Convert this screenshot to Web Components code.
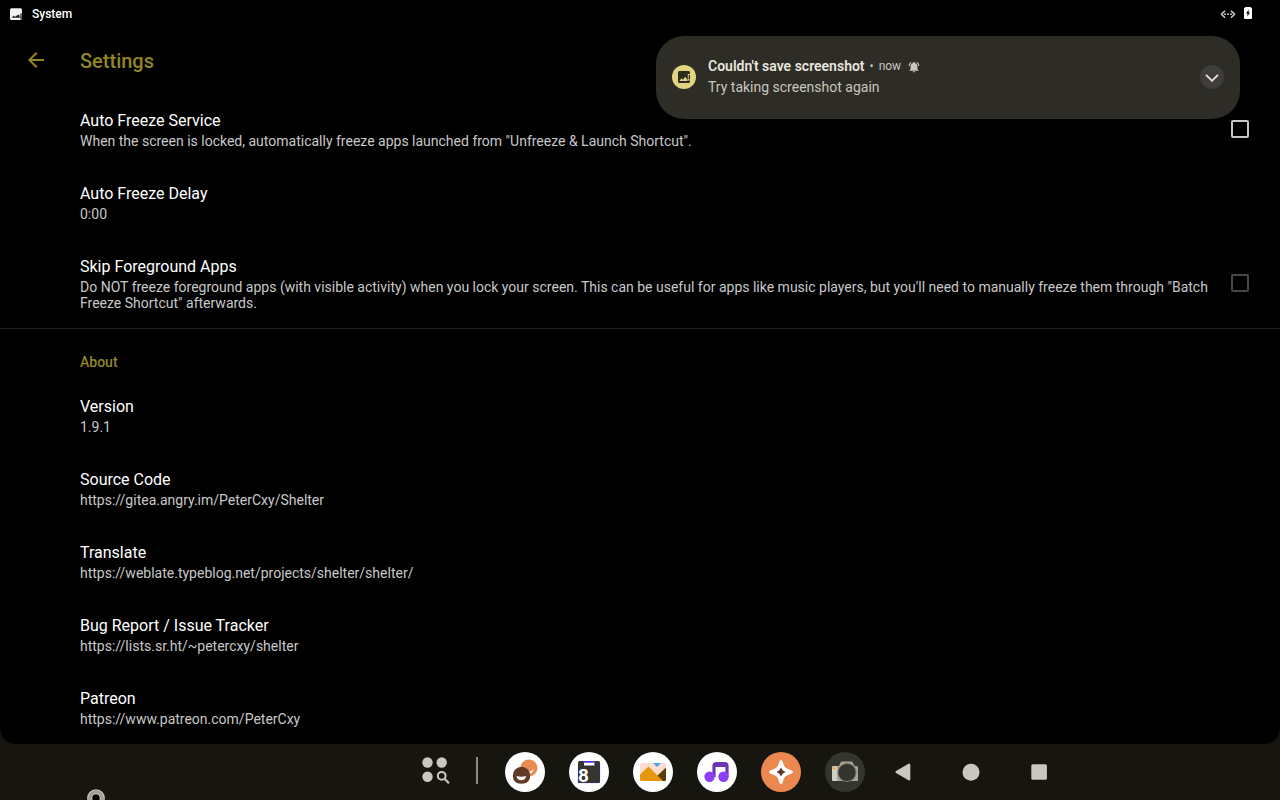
<!DOCTYPE html>
<html lang="en">
<head>
<meta charset="utf-8">
<meta name="viewport" content="width=device-width, initial-scale=1">
<title>Settings</title>
<style>
  body {
    margin: 0;
    background: #16150f;
    color: #fff;
    font-family: Roboto, sans-serif;
  }
</style>
</head>
<body>
<tablet-screen>
  <status-bar slot="status">System</status-bar>
  <app-toolbar>Settings</app-toolbar>
  <setting-group>
    <setting-row type="check" heading="Auto Freeze Service">When the screen is locked, automatically freeze apps launched from "Unfreeze &amp; Launch Shortcut".</setting-row>
    <setting-row heading="Auto Freeze Delay">0:00</setting-row>
    <setting-row type="check" heading="Skip Foreground Apps" disabled>Do NOT freeze foreground apps (with visible activity) when you lock your screen. This can be useful for apps like music players, but you'll need to manually freeze them through "Batch Freeze Shortcut" afterwards.</setting-row>
  </setting-group>
  <setting-group heading="About">
    <setting-row heading="Version">1.9.1</setting-row>
    <setting-row type="link" heading="Source Code">https://gitea.angry.im/PeterCxy/Shelter</setting-row>
    <setting-row type="link" heading="Translate">https://weblate.typeblog.net/projects/shelter/shelter/</setting-row>
    <setting-row type="link" heading="Bug Report / Issue Tracker">https://lists.sr.ht/~petercxy/shelter</setting-row>
    <setting-row type="link" heading="Patreon">https://www.patreon.com/PeterCxy</setting-row>
  </setting-group>
  <heads-up slot="overlay" heading="Couldn't save screenshot" time="now">Try taking screenshot again</heads-up>
  <task-bar slot="taskbar"></task-bar>
</tablet-screen>

<script>
class TabletScreen extends HTMLElement {
  constructor() {
    super();
    this.attachShadow({ mode: 'open' });
    this.shadowRoot.innerHTML = `
      <style>
        :host {
          display: flex;
          flex-direction: column;
          position: relative;
          min-height: 100vh;
          overflow: hidden;
        }
        .app {
          flex: 1;
          background: #000;
          border-radius: 0 0 16px 16px;
        }
        /* stylus hover ring, peeks in from the bottom edge */
        .pointer {
          position: absolute;
          left: 87px;
          bottom: -7px;
          width: 18px;
          height: 18px;
        }
      </style>
      <div class="app">
        <slot name="status"></slot>
        <main><slot></slot></main>
      </div>
      <slot name="taskbar"></slot>
      <slot name="overlay"></slot>
      <svg class="pointer" viewBox="0 0 18 18" aria-hidden="true">
        <circle cx="9" cy="9" r="6.3" fill="#000" stroke="#e2cdbb" stroke-width="5"/>
        <circle cx="9" cy="9" r="6.3" fill="none" stroke="#9c9c9a" stroke-width="3"/>
      </svg>
    `;
  }
}

class StatusBar extends HTMLElement {
  constructor() {
    super();
    this.attachShadow({ mode: 'open' });
    this.shadowRoot.innerHTML = `
      <style>
        :host {
          display: flex;
          align-items: center;
          height: 28px;
          padding: 0 28px 0 8px;
          font-size: 12px;
          font-weight: 500;
        }
        svg { display: block; }
        .name { flex: 1; margin-left: 8px; }
        .battery { margin-left: 8px; }
      </style>
      <svg width="16" height="16" viewBox="0 0 16 16">
        <path fill="#f2f2f2" d="M3.5 2.2h9A1.5 1.5 0 0 1 14 3.7v3.8h-1.6v5.2H14v1.2H3.5A1.5 1.5 0 0 1 2 12.4V3.7a1.5 1.5 0 0 1 1.5-1.5z"/>
        <path fill="#222" d="M3.6 11.8l2-2 1.6 1 3-2.2 1.5 1.2v2z"/>
        <path fill="#777" d="M12.4 7.5H14v4h-1.600zM12.400 12.400H14v1.500h-1.600z"/>
      </svg>
      <span class="name"><slot></slot></span>
      <svg width="16" height="16" viewBox="0 0 16 16" fill="none" stroke="#ccc" stroke-width="1.500">
        <path d="M5 4.800L1.500 8.300 5 11.800M11 4.800l3.500 3.500L11 11.800"/>
        <path d="M4.200 8.300h8" stroke-dasharray="1.800 1.200"/>
      </svg>
      <svg class="battery" width="8" height="16" viewBox="0 0 8 16">
        <path fill="#fff" d="M1.500 1h5v.5H7a1 1 0 0 1 1 1V12a1 1 0 0 1-1 1H1a1 1 0 0 1-1-1V2.500a1 1 0 0 1 1-1h.5z"/>
        <path fill="#000" d="M4.800 3.500L2 7.600h1.600l-.3 3L6 6.600H4.500z"/>
      </svg>
    `;
  }
}

class AppToolbar extends HTMLElement {
  constructor() {
    super();
    this.attachShadow({ mode: 'open' });
    this.shadowRoot.innerHTML = `
      <style>
        :host {
          display: flex;
          align-items: flex-start;
          box-sizing: border-box;
          height: 65px;
          padding: 20px 24px 0;
          gap: 32px;
          color: #938622;
        }
        button {
          width: 24px;
          height: 24px;
          padding: 0;
          border: 0;
          background: none;
          color: inherit;
        }
        svg { display: block; }
        h1 {
          margin: 0;
          font-size: 20px;
          line-height: 26px;
          font-weight: 500;
        }
      </style>
      <button aria-label="Navigate up">
        <svg width="24" height="24" viewBox="0 0 24 24" fill="currentColor">
          <path d="M20 11H7.830l5.590-5.590L12 4l-8 8 8 8 1.410-1.410L7.830 13H20v-2z"/>
        </svg>
      </button>
      <h1><slot></slot></h1>
    `;
  }
}

class SettingGroup extends HTMLElement {
  constructor() {
    super();
    this.attachShadow({ mode: 'open' });
  }

  connectedCallback() {
    const heading = this.getAttribute('heading');
    this.shadowRoot.innerHTML = `
      <style>
        :host { display: block; }
        :host([heading]) { border-top: 1px solid #212121; }
        h2 {
          margin: 0;
          padding: 24px 80px 8px;
          font-size: 14px;
          line-height: 18px;
          font-weight: 500;
          color: #938622;
        }
      </style>
      ${heading ? `<h2>${heading}</h2>` : ''}
      <slot></slot>
    `;
  }
}

class SettingRow extends HTMLElement {
  constructor() {
    super();
    this.attachShadow({ mode: 'open' });
  }

  connectedCallback() {
    const type = this.getAttribute('type');
    const off = this.hasAttribute('disabled') ? 'disabled' : '';
    let tag = 'div';
    let attrs = '';
    if (type === 'check') {
      tag = 'label';
      attrs = 'for="box"';
    } else if (type === 'link') {
      tag = 'a';
      attrs = `href="${this.textContent.trim()}"`;
    }
    this.shadowRoot.innerHTML = `
      <style>
        :host { display: block; }
        .row {
          display: flex;
          align-items: center;
          padding: 16px 31px 17px 80px;
          color: inherit;
          text-decoration: none;
        }
        .text { flex: 1; }
        .title {
          display: block;
          font-size: 16px;
          line-height: 24px;
        }
        .summary {
          display: block;
          font-size: 14px;
          line-height: 16px;
          color: #c8c8c8;
        }
        input {
          appearance: none;
          box-sizing: border-box;
          flex: none;
          width: 18px;
          height: 18px;
          margin: 0 0 0 20px;
          border: 2px solid #c8c8c8;
          border-radius: 2px;
        }
        input:checked { background: #938622; }
        input:disabled { border-color: #484848; }
      </style>
      <${tag} class="row" ${attrs}>
        <span class="text">
          <span class="title">${this.getAttribute('heading')}</span>
          <span class="summary"><slot></slot></span>
        </span>
        ${type === 'check' ? `<input type="checkbox" id="box" ${off}>` : ''}
      </${tag}>
    `;
  }
}

class HeadsUp extends HTMLElement {
  constructor() {
    super();
    this.attachShadow({ mode: 'open' });
  }

  connectedCallback() {
    this.shadowRoot.innerHTML = `
      <style>
        :host {
          position: absolute;
          top: 36px;
          right: 40px;
          box-sizing: border-box;
          display: flex;
          align-items: center;
          width: 584px;
          max-width: calc(100% - 80px);
          padding: 20px 16px 21px;
          border-radius: 28px;
          background: #2d2c27;
        }
        svg { display: block; }
        .text { flex: 1; margin-left: 12px; }
        .head {
          display: flex;
          align-items: center;
          gap: 5px;
          line-height: 21px;
          font-size: 12px;
          color: #c9c7be;
        }
        strong {
          font-size: 14px;
          font-weight: 600;
          color: #e8e6dd;
        }
        .head svg { margin-left: 2px; }
        .body {
          font-size: 14px;
          line-height: 21px;
          color: #c9c7be;
        }
        button {
          width: 24px;
          height: 24px;
          padding: 0;
          border: 0;
          border-radius: 50%;
          background: #3f3e3a;
        }
      </style>
      <svg width="24" height="24" viewBox="0 0 24 24">
        <circle cx="12" cy="12" r="12" fill="#e1d481"/>
        <path fill="#2d2c1c" d="M7.500 6h9A1.500 1.500 0 0 1 18 7.500V9h-2.200v6.500H18v1a1.500 1.500 0 0 1-1.500 1.500h-9A1.500 1.500 0 0 1 6 16.500v-9A1.500 1.500 0 0 1 7.500 6z"/>
        <path fill="#e1d481" d="M7.500 16l2-2.700 1.500 1.500 2.200-3 2.300 3V16z"/>
        <path fill="#2d2c1c" d="M16.700 10H18v4.500h-1.300z"/>
      </svg>
      <div class="text">
        <div class="head">
          <strong>${this.getAttribute('heading')}</strong>
          <span>•</span>
          <span>${this.getAttribute('time')}</span>
          <svg width="12" height="12" viewBox="0 0 24 24" fill="#c9c7be">
            <path d="M12 23c1.300 0 2.400-1 2.400-2.300H9.600C9.600 22 10.700 23 12 23zM19 16.500V11c0-3.400-1.900-6.200-5.300-7V3.300a1.700 1.700 0 0 0-3.400 0V4C6.900 4.800 5 7.600 5 11v5.500l-2 2v1h18v-1zM7 3.500L5.500 2C3.100 3.800 1.500 6.700 1.300 10h2.200C3.700 7.300 5 5 7 3.500zM20.500 10h2.200c-.2-3.300-1.800-6.200-4.200-8L17 3.500c2 1.500 3.300 3.800 3.500 6.500z"/>
          </svg>
        </div>
        <div class="body"><slot></slot></div>
      </div>
      <button aria-label="Expand">
        <svg width="24" height="24" viewBox="0 0 24 24" fill="none" stroke="#e8e6dd" stroke-width="1.800">
          <path d="M6 9.800l6 6 6-6"/>
        </svg>
      </button>
    `;
  }
}

// app icons, drawn on a 40px circle
const APPS = [
  ['Contacts', '#fff', `
    <path fill="#ea8a55" d="M24 7.500a8.500 8.500 0 1 1 0 17 8.500 8.500 0 0 1 0-17z"/>
    <path fill="#fff" d="M23 19.200c2 .6 4.500-.2 5.700-2.200-.2 3-2.700 5-5.700 4.500z"/>
    <path fill="#5f3a26" d="M16.500 14.700a8.600 8.600 0 0 1 8.600 8.600c0 5.500-2.600 8.500-8.600 8.500s-8.600-3-8.600-8.500a8.600 8.600 0 0 1 8.600-8.600z"/>
    <path fill="#fff" d="M11.500 24c3 1.100 6.800 1.100 9.700 0-.6 2.900-2.400 4.200-4.900 4.200s-4.300-1.300-4.800-4.200z"/>`],
  ['Calendar', '#fff', `
    <rect x="9" y="9" width="22" height="22" rx="1.500" fill="#35342f"/>
    <path fill="none" stroke="#33307a" stroke-width=".8" d="M9.400 16v14.600h21M30.600 12v16"/>
    <path fill="#4a35f0" d="M14.300 9h12v1.700h-12z"/>
    <path fill="#fff" d="M15 10.700h10.400v2.800H15z"/>
    <text x="9" y="30" font-family="Roboto, sans-serif" font-size="19" font-weight="700" fill="#fff">8</text>`],
  ['Gallery', '#fff', `
    <rect x="7" y="11" width="26" height="18" rx="1.500" fill="#fbdccd"/>
    <path fill="#43a5f5" d="M20 11h8l-4 4z"/>
    <path fill="#5a3d05" d="M24.500 23.500L33 15.500v12a1.500 1.500 0 0 1-1.500 1.500H24z"/>
    <path fill="#e7960d" d="M7 22.500l8.500-8L30 29H8.500A1.500 1.500 0 0 1 7 27.500z"/>`],
  ['Music', '#fff', `
    <path fill="none" stroke="#6b35b5" stroke-width="3.200" d="M17 25V14a2.500 2.500 0 0 1 2.500-2.500h8A2.500 2.500 0 0 1 30 14v11"/>
    <path fill="#6b35b5" d="M17 12h13v3H17z"/>
    <circle cx="12.500" cy="24.800" r="5.200" fill="#8d3ff8"/>
    <circle cx="26.500" cy="24.800" r="5.200" fill="#8d3ff8"/>`],
  ['Gallery viewer', '#ea8850', `
    <path fill="#fff" d="M20 8q1.500 0 2 2.500 1 6 7 7.200 3 .8 3 2.300t-3 2.300q-6 1.200-7 7.200Q21.500 32 20 32t-2-2.500q-1-6-7-7.200Q8 21.500 8 20t3-2.300q6-1.200 7-7.200Q18.500 8 20 8z"/>
    <path fill="#5f3a26" d="M20 15.500l1.700 2.800 2.800 1.700-2.800 1.700-1.700 2.800-1.700-2.800-2.800-1.700 2.800-1.700z"/>`],
  ['Camera', '#35352f', `
    <path fill="#a4a597" d="M8.500 14H14l2.200-4.500h11L29.500 14h2A1.500 1.500 0 0 1 33 15.500V29H8.500A1.500 1.500 0 0 1 7 27.500v-12A1.500 1.500 0 0 1 8.500 14z"/>
    <path fill="#d0d0c6" d="M8.500 14H12v15H8.500A1.500 1.500 0 0 1 7 27.500v-12A1.500 1.500 0 0 1 8.500 14z"/>
    <circle cx="22" cy="20.500" r="9" fill="#35352f" stroke="#75776b"/>
    <path fill="#ff9d1c" d="M8 15.300h2.400v2H8z"/>`]
];

class AppIcon extends HTMLElement {
  constructor() {
    super();
    this.attachShadow({ mode: 'open' });
  }

  connectedCallback() {
    const [label, colour, art] = APPS[this.getAttribute('app')];
    this.shadowRoot.innerHTML = `
      <style>
        :host { display: block; }
        button {
          display: block;
          width: 40px;
          height: 40px;
          padding: 0;
          border: 0;
          border-radius: 50%;
          background: ${colour};
        }
        svg { display: block; }
      </style>
      <button aria-label="${label}">
        <svg width="40" height="40" viewBox="0 0 40 40">${art}</svg>
      </button>
    `;
  }
}

class TaskBar extends HTMLElement {
  constructor() {
    super();
    this.attachShadow({ mode: 'open' });
    this.shadowRoot.innerHTML = `
      <style>
        :host {
          display: flex;
          justify-content: center;
          align-items: center;
          height: 56px;
          padding-left: 194px;
        }
        button {
          padding: 0;
          border: 0;
          background: none;
        }
        svg { display: block; }
        .line {
          width: 2px;
          height: 27px;
          margin: 0 27px 4px 21px;
          background: #8b8a83;
        }
        .apps { display: flex; gap: 24px; }
        .nav {
          display: flex;
          gap: 28px;
          margin-left: 18px;
          fill: #cac7be;
        }
      </style>
      <button aria-label="All apps">
        <svg width="40" height="40" viewBox="0 0 40 40" fill="#cac7be">
          <circle cx="12.500" cy="10.500" r="5.200"/>
          <circle cx="26.700" cy="10.500" r="5.200"/>
          <circle cx="12.500" cy="24.800" r="5.200"/>
          <circle cx="26.700" cy="23.800" r="3.900" fill="none" stroke="#cac7be" stroke-width="2"/>
          <path d="M29.500 26.800l4.500 4.500" stroke="#cac7be" stroke-width="2.200"/>
        </svg>
      </button>
      <div class="line"></div>
      <div class="apps">
        ${APPS.map((app, i) => `<app-icon app="${i}"></app-icon>`).join('')}
      </div>
      <div class="nav">
        <button aria-label="Back">
          <svg width="40" height="40" viewBox="0 0 40 40"><path d="M13 19l12.500-7.300a1.200 1.200 0 0 1 1.800 1v14.600a1.200 1.200 0 0 1-1.800 1L13 21a1.200 1.200 0 0 1 0-2z"/></svg>
        </button>
        <button aria-label="Home">
          <svg width="40" height="40" viewBox="0 0 40 40"><circle cx="20" cy="20.200" r="8.500"/></svg>
        </button>
        <button aria-label="Recents">
          <svg width="40" height="40" viewBox="0 0 40 40"><rect x="12.300" y="12.200" width="15.600" height="15.600" rx="1.600"/></svg>
        </button>
      </div>
    `;
  }
}

customElements.define('tablet-screen', TabletScreen);
customElements.define('status-bar', StatusBar);
customElements.define('app-toolbar', AppToolbar);
customElements.define('setting-group', SettingGroup);
customElements.define('setting-row', SettingRow);
customElements.define('heads-up', HeadsUp);
customElements.define('app-icon', AppIcon);
customElements.define('task-bar', TaskBar);
</script>
</body>
</html>
